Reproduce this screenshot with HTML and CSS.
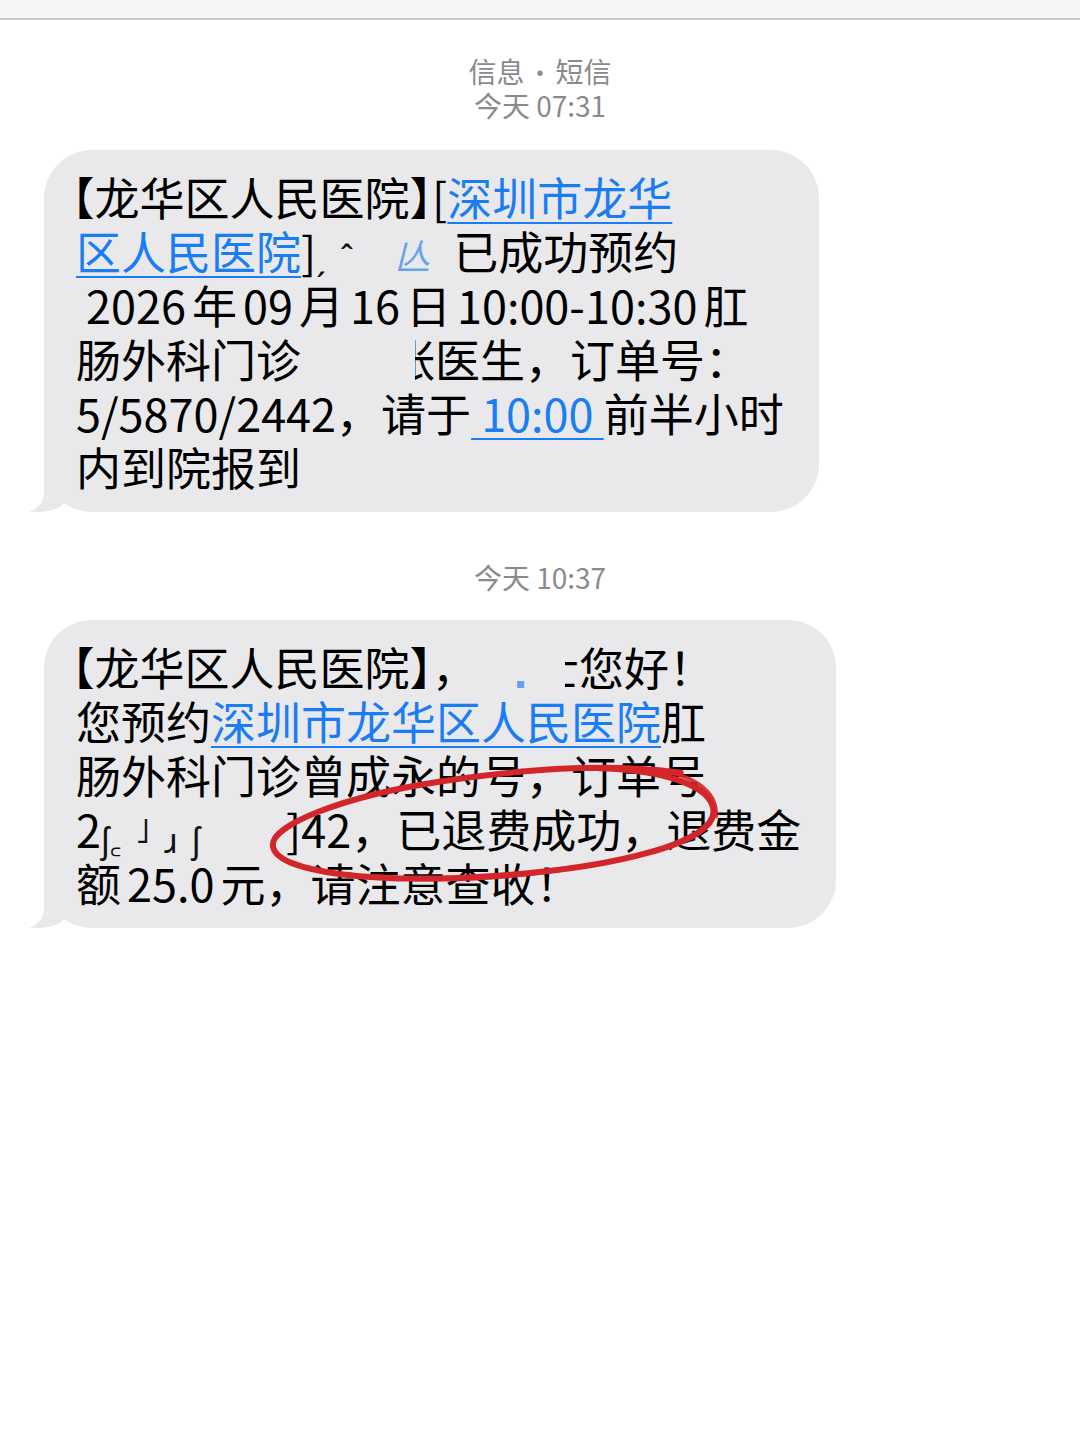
FILE: index.html
```html
<!DOCTYPE html>
<html lang="zh-CN">
<head>
<meta charset="utf-8">
<title>信息 · 短信</title>
<link rel="stylesheet" href="styles.css">
</head>
<body>
<div class="topbar"></div>
<div class="thread">
  <div class="stamp">
    <div class="sline">信息<span class="dot">•</span>短信</div>
    <div class="sline">今天 07:31</div>
  </div>
  <div class="bubble b1">
    <div class="line"><span class="hw lead">【</span>龙华区人民医院<span class="hw">】</span>[<a class="link">深圳市龙华</a></div>
    <div class="line"><a class="link">区人民医院</a>]<span class="gap g1"><span class="frag">ˏ</span><span class="frag f2">ˆ</span><span class="bfrag">亾</span></span>已成功预约</div>
    <div class="line num">&nbsp;2026<span class="sp"></span>年<span class="sp"></span>09<span class="sp"></span>月<span class="sp"></span>16<span class="sp"></span>日<span class="sp"></span>10:00-10:30<span class="sp"></span>肛</div>
    <div class="line">肠外科门诊<span class="gap g2"></span><span class="clip"><span>张</span></span>医生，订单号：</div>
    <div class="line">5/5870/2442，请于<a class="link">&nbsp;10:00&nbsp;</a>前半小时</div>
    <div class="line">内到院报到</div>
  </div>
  <div class="stamp second">
    <div class="sline">今天 10:37</div>
  </div>
  <div class="bubble b2">
    <div class="line"><span class="hw lead">【</span>龙华区人民医院<span class="hw">】</span>，<span class="gap g3"><span class="bfrag small">▖</span></span><span class="clip c2"><span>士</span></span>您好！</div>
    <div class="line">您预约<a class="link">深圳市龙华区人民医院</a>肛</div>
    <div class="line">肠外科门诊曾成永的号，订单号</div>
    <div class="line">2<span class="gap g4"><span class="frag">ʃ꜀</span><span class="frag up">˩</span><span class="frag">ɹ</span><span class="frag">ʃ</span></span>]42，已退费成功，退费金</div>
    <div class="line">额<span class="sp"></span>25.0<span class="sp"></span>元，请注意查收！</div>
    <svg class="circle" viewBox="0 0 800 320" width="800" height="320" aria-hidden="true">
      <g fill="none" stroke="#d3262b" stroke-linecap="round" transform="rotate(-4 448 206)">
        <path d="M640 166 C 560 150, 480 152, 400 158 C 300 166, 228 190, 228 210 C 228 238, 330 256, 450 256 C 570 256, 670 238, 670 206 C 670 180, 620 162, 560 156" stroke-width="6"/>
        <path d="M612 160 C 650 168, 676 186, 672 212" stroke-width="4" opacity="0.9"/>
        <path d="M330 248 C 400 260, 480 260, 560 250" stroke-width="4" opacity="0.85"/>
      </g>
    </svg>
  </div>
</div>
</body>
</html>
```
FILE: styles.css
```css
html, body {
  margin: 0;
  padding: 0;
  background: #ffffff;
}
body {
  width: 1080px;
  height: 1440px;
  font-family: "Noto Sans CJK SC", "Noto Sans", sans-serif;
  overflow: hidden;
}
.topbar {
  height: 18px;
  background: #f5f5f5;
  border-bottom: 2px solid #c9c9c9;
}
.thread {
  display: flex;
  flex-direction: column;
  align-items: flex-start;
  padding-left: 44px;
}
.stamp {
  align-self: stretch;
  margin-left: -44px;
  margin-top: 34px;
  margin-bottom: 28px;
  text-align: center;
  font-size: 28px;
  line-height: 34px;
  color: #8a8a8e;
}
.sline {
  height: 34px;
}
.stamp .dot {
  font-family: "Liberation Sans", sans-serif;
  font-size: 20px;
  line-height: 1;
  margin: 0 12px;
  position: relative;
  top: -3px;
}
.stamp.second {
  margin-top: 48px;
  margin-bottom: 26px;
}
.bubble {
  position: relative;
  background: #e9e9eb;
  border-radius: 48px;
  padding: 20px 35px 18px 32px;
  font-size: 45px;
  line-height: 54px;
  color: #000;
  white-space: nowrap;
}
.bubble::before {
  content: "";
  position: absolute;
  left: -14px;
  bottom: 0;
  width: 44px;
  height: 44px;
  background: #e9e9eb;
  border-bottom-right-radius: 34px 28px;
}
.bubble::after {
  content: "";
  position: absolute;
  left: -30px;
  bottom: -1px;
  width: 30px;
  height: 46px;
  background: #ffffff;
  border-bottom-right-radius: 22px 20px;
}
.line {
  height: 54px;
}
.hw {
  font-feature-settings: "halt" 1;
}
.hw.lead {
  margin-left: -4px;
}
.link {
  color: #1a7df4;
  text-decoration: underline;
  text-decoration-thickness: 2px;
  text-underline-offset: 6px;
}
.sp {
  display: inline-block;
  width: 6px;
}
.gap {
  display: inline-block;
  position: relative;
  vertical-align: top;
  height: 54px;
}
.g1 { width: 137px; }
.g2 { width: 114px; }
.g3 { width: 88px; }
.g4 { width: 185px; }
.frag {
  display: inline-block;
  color: #111;
  font-size: 34px;
  margin-right: 14px;
}
.frag.f2 { margin-right: 40px; }
.frag.up { vertical-align: 10px; }
.bfrag {
  display: inline-block;
  color: #3a8cf0;
  font-size: 36px;
  font-style: italic;
  opacity: 0.75;
}
.bfrag.small {
  margin-left: 40px;
  font-size: 14px;
  font-style: normal;
}
.clip {
  display: inline-block;
  width: 20px;
  overflow: hidden;
  vertical-align: top;
  height: 54px;
}
.clip > span {
  display: inline-block;
  margin-left: -25px;
}
.clip.c2 { width: 14px; }
.clip.c2 > span { margin-left: -31px; }
.circle {
  position: absolute;
  left: 0;
  top: 0;
  overflow: visible;
  pointer-events: none;
}
```
